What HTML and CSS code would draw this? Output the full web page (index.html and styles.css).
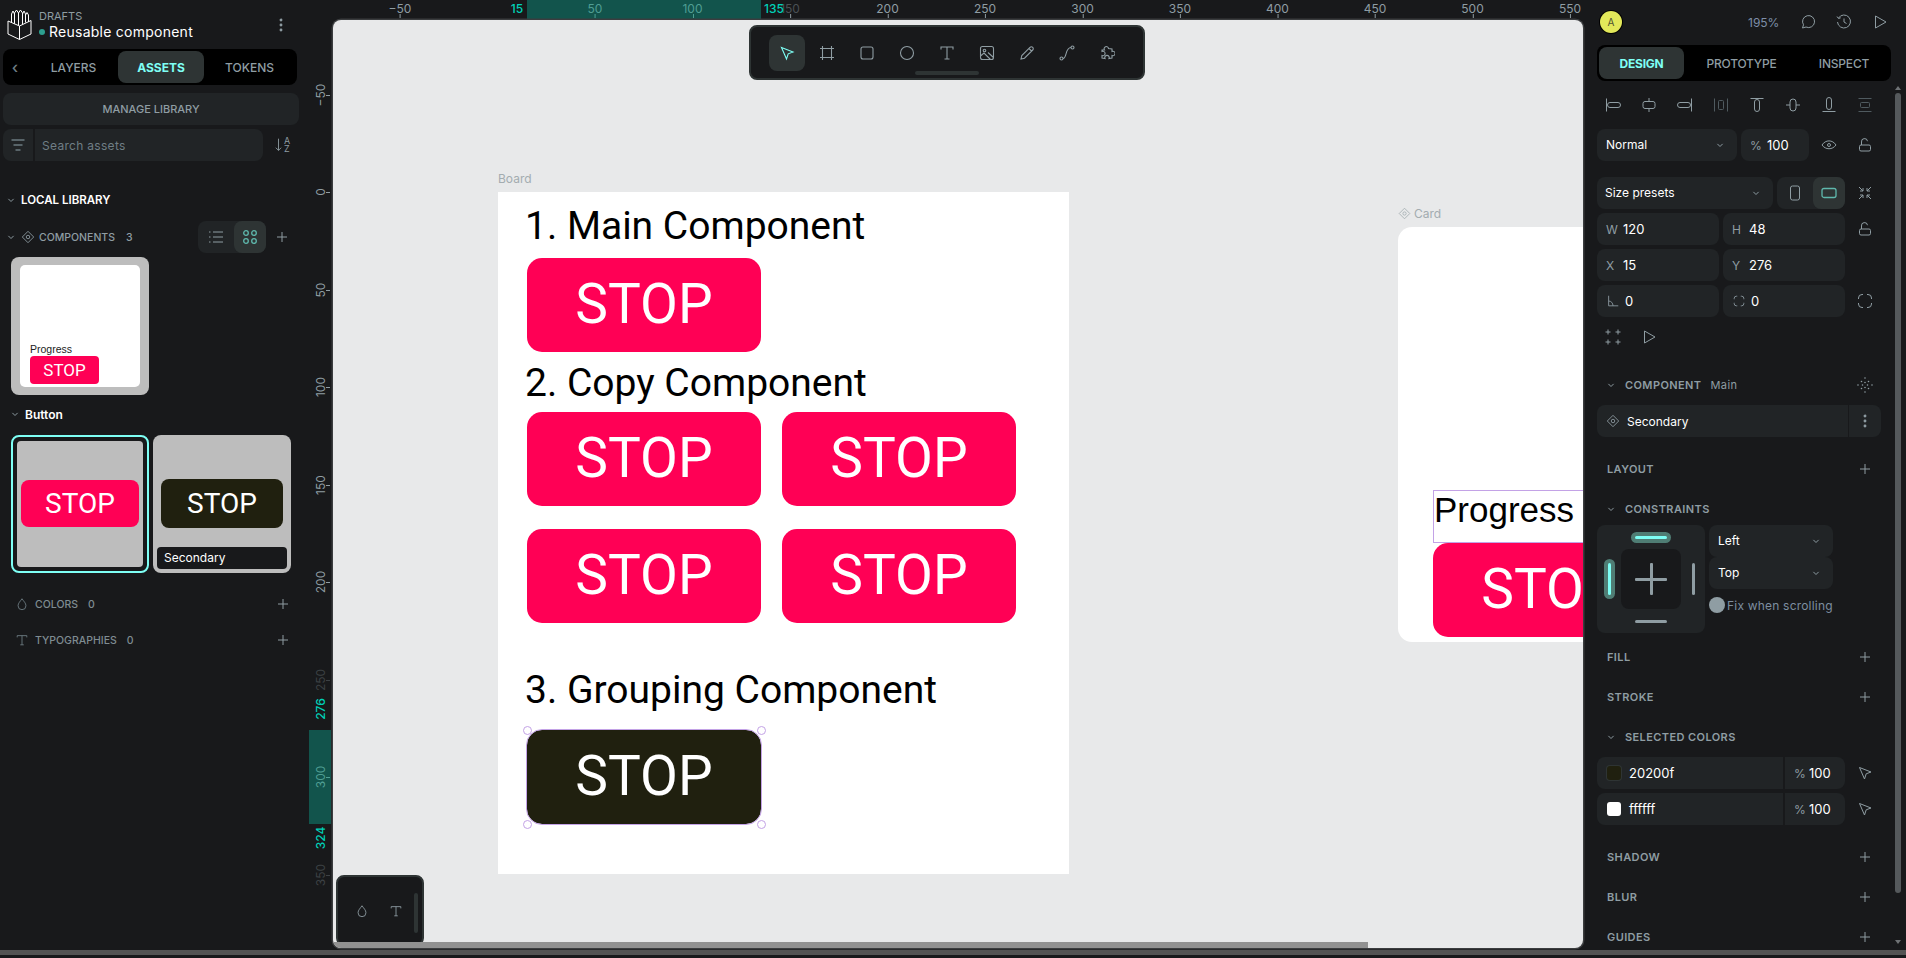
FILE: index.html

```html
<!DOCTYPE html>
<html lang="en">
<head>
    <meta charset="UTF-8">
    <title>Reusable component</title>
    <link rel="stylesheet" href="styles.css">
</head>
<body>
<svg class="sprite" width="0" height="0">
    <symbol id="plus" viewBox="0 0 16 16"><path d="M8 3v10M3 8h10"/></symbol>
    <symbol id="chev" viewBox="0 0 16 16"><path d="M4.5 6.5 8 10l3.5-3.500"/></symbol>
    <symbol id="diamond" viewBox="0 0 16 16"><path d="M8 1.5 14.5 8 8 14.5 1.5 8z"/><circle cx="8" cy="8" r="2"/></symbol>
    <symbol id="lock" viewBox="0 0 16 16"><rect x="2.5" y="8" width="11" height="6" rx="1.5"/><path d="M4.5 8V5a3 3 0 0 1 6-.8"/></symbol>
    <symbol id="arrow" viewBox="0 0 16 16"><path d="M2.5 2.5 14 7l-4.8 1.8L7.500 14z"/></symbol>
    <symbol id="play" viewBox="0 0 16 16"><path d="M3.5 2v12L14 8z"/></symbol>
    <symbol id="dots" viewBox="0 0 16 16"><circle cx="8" cy="3" r=".8"/><circle cx="8" cy="8" r=".8"/><circle cx="8" cy="13" r=".8"/></symbol>
</svg>

<div class="app">
    <aside class="left">
        <div class="file-head">
            <svg class="logo" viewBox="0 0 25 31"><path d="M1 12 12.5 17 24 11.5V25l-11.500 5.500L1 25zM12.5 17v13.500M4.500 13V5l1.500-3 1.500 3v9.500M7.500 14.500V4l2-3 2 3v12M11.500 16V4l2-3 2 3v11M15.500 15V5l1.500-3 1.500 3v8M18.500 13.500V6l1.500-2.500L21.500 6v7"/></svg>
            <div class="file-names">
                <div class="drafts">DRAFTS</div>
                <div class="file-name"><i class="status-dot"></i>Reusable component</div>
            </div>
            <svg class="icon dots-menu"><use href="#dots"/></svg>
        </div>
        <div class="tabs left-tabs">
            <span class="tab-back">&#8249;</span>
            <span class="tab tab-layers">LAYERS</span>
            <span class="tab tab-assets active">ASSETS</span>
            <span class="tab tab-tokens">TOKENS</span>
        </div>
        <div class="manage">MANAGE LIBRARY</div>
        <div class="search-row">
            <div class="filter-btn"><svg viewBox="0 0 16 16" class="icon"><path d="M1.5 3h13M3.5 8h9M5.5 13h5"/></svg></div>
            <div class="search-box">Search assets</div>
            <div class="sort-btn">
                <svg viewBox="0 0 10 16" class="sort-arrow"><path d="M5 1v13M2 11l3 3 3-3"/></svg>
                <span class="sort-az">A<br>Z</span>
            </div>
        </div>
        <div class="lib-title"><svg class="chev"><use href="#chev"/></svg>LOCAL LIBRARY</div>
        <div class="comp-row">
            <svg class="chev"><use href="#chev"/></svg>
            <svg class="icon diamond"><use href="#diamond"/></svg>
            <span class="comp-label">COMPONENTS</span>
            <span class="comp-count">3</span>
            <div class="view-toggle">
                <span class="view-opt"><svg viewBox="0 0 16 16" class="icon"><path d="M5 3h10M5 8h10M5 13h10M1 3h1.5M1 8h1.5M1 13h1.5"/></svg></span>
                <span class="view-opt active"><svg viewBox="0 0 16 16" class="icon"><circle cx="4" cy="4" r="2.3"/><circle cx="12" cy="4" r="2.3"/><circle cx="4" cy="12" r="2.3"/><circle cx="12" cy="12" r="2.3"/></svg></span>
            </div>
            <svg class="icon plus-left"><use href="#plus"/></svg>
        </div>
        <div class="thumb card-thumb">
            <div class="thumb-card">
                <div class="thumb-progress">Progress</div>
                <div class="thumb-stop">STOP</div>
            </div>
        </div>
        <div class="group-title"><svg class="chev"><use href="#chev"/></svg>Button</div>
        <div class="thumb-row">
            <div class="thumb btn-thumb selected">
                <div class="thumb-inner"><div class="big-stop red">STOP</div></div>
            </div>
            <div class="thumb btn-thumb second">
                <div class="big-stop dark">STOP</div>
                <div class="thumb-label">Secondary</div>
            </div>
        </div>
        <div class="asset-row first">
            <svg viewBox="0 0 16 16" class="icon asset-icon"><path d="M8 2C6 5 3.5 7 3.5 10a4.5 4.5 0 0 0 9 0C12.500 7 10 5 8 2z"/></svg>
            <span class="comp-label">COLORS</span><span class="comp-count">0</span>
            <svg class="icon plus-left"><use href="#plus"/></svg>
        </div>
        <div class="asset-row">
            <svg viewBox="0 0 16 16" class="icon asset-icon"><path d="M2.5 5V3h11v2M8 3v10.500M6 13.500h4"/></svg>
            <span class="comp-label">TYPOGRAPHIES</span><span class="comp-count">0</span>
            <svg class="icon plus-left"><use href="#plus"/></svg>
        </div>
    </aside>

    <main class="center">
        <div class="ruler-top">
            <div class="ruler-sel-x"></div>
            <span class="rt" style="left:91px">&minus;50</span>
            <span class="rt-green" style="left:208px">15</span>
            <span class="rt on-sel" style="left:286px">50</span>
            <span class="rt on-sel" style="left:383.5px">100</span>
            <span class="rt dim" style="left:481px">150</span>
            <span class="rt-green" style="left:465px">135</span>
            <span class="rt" style="left:578.5px">200</span>
            <span class="rt" style="left:676px">250</span>
            <span class="rt" style="left:773.5px">300</span>
            <span class="rt" style="left:871px">350</span>
            <span class="rt" style="left:968.5px">400</span>
            <span class="rt" style="left:1066px">450</span>
            <span class="rt" style="left:1163.5px">500</span>
            <span class="rt" style="left:1261px">550</span>
        </div>
        <div class="mid">
            <div class="ruler-left">
                <div class="ruler-sel-y"></div>
                <div class="rl" style="top:74.5px"><span>&minus;50</span></div>
                <div class="rl" style="top:172px"><span>0</span></div>
                <div class="rl" style="top:269.5px"><span>50</span></div>
                <div class="rl" style="top:367px"><span>100</span></div>
                <div class="rl" style="top:464.5px"><span>150</span></div>
                <div class="rl" style="top:562px"><span>200</span></div>
                <div class="rl dim" style="top:659.5px"><span>250</span></div>
                <div class="rl green" style="top:689px"><span>276</span></div>
                <div class="rl on-sel" style="top:757px"><span>300</span></div>
                <div class="rl green" style="top:818px"><span>324</span></div>
                <div class="rl dim" style="top:854.5px"><span>350</span></div>
            </div>
            <div class="canvas">
                <div class="board-label">Board</div>
                <div class="board">
                    <div class="heading h-one">1. Main Component</div>
                    <div class="stop-btn red b-main">STOP</div>
                    <div class="heading h-two">2. Copy Component</div>
                    <div class="stop-btn red b-a">STOP</div>
                    <div class="stop-btn red b-b">STOP</div>
                    <div class="stop-btn red b-c">STOP</div>
                    <div class="stop-btn red b-d">STOP</div>
                    <div class="heading h-three">3. Grouping Component</div>
                    <div class="stop-btn dark b-sel">
                        STOP
                        <i class="handle tl"></i><i class="handle tr"></i><i class="handle bl"></i><i class="handle br"></i>
                    </div>
                </div>
                <div class="card-label"><svg class="icon"><use href="#diamond"/></svg>Card</div>
                <div class="card">
                    <div class="card-progress">Progress</div>
                    <div class="stop-btn red card-stop">STOP</div>
                </div>

                <div class="toolbar">
                    <span class="tool active"><svg class="icon"><use href="#arrow"/></svg></span>
                    <span class="tool"><svg viewBox="0 0 16 16" class="icon"><path d="M3.5 1v14M12.5 1v14M1 3.5h14M1 12.5h14"/></svg></span>
                    <span class="tool"><svg viewBox="0 0 16 16" class="icon"><rect x="2" y="2" width="12" height="12" rx="2"/></svg></span>
                    <span class="tool"><svg viewBox="0 0 16 16" class="icon"><circle cx="8" cy="8" r="6.5"/></svg></span>
                    <span class="tool"><svg viewBox="0 0 16 16" class="icon"><path d="M2 4.5V2h12v2.500M8 2v12M5.500 14h5"/></svg></span>
                    <span class="tool"><svg viewBox="0 0 16 16" class="icon"><rect x="1.5" y="1.5" width="13" height="13" rx="2"/><circle cx="5.5" cy="5.500" r="1.3"/><path d="M1.5 11 5 8l6.500 6.500M9 7.500l5.500 5"/></svg></span>
                    <span class="tool"><svg viewBox="0 0 16 16" class="icon"><path d="M2 14l.8-3.500L11 2.300a1.500 1.500 0 0 1 2.700 2.700L5.500 13.200zM10 3.500 12.500 6"/></svg></span>
                    <span class="tool"><svg viewBox="0 0 16 16" class="icon"><circle cx="2.500" cy="13.500" r="1.500"/><circle cx="13.500" cy="2.500" r="1.500"/><path d="M4 13.500C8 13.500 6 2.500 12 2.500"/></svg></span>
                    <span class="tool"><svg viewBox="0 0 16 16" class="icon"><path d="M3 5h2.500a2.200 2.200 0 1 1 4-1.500L13 4v2.500a2.200 2.200 0 1 1 0 4V13l-3 .5a2.200 2.200 0 1 0-4 0L3 13v-2.500a2.200 2.200 0 1 0 0-4z"/></svg></span>
                    <i class="tool-grip"></i>
                </div>

                <div class="mini-tools">
                    <svg viewBox="0 0 16 16" class="icon"><path d="M8 2C6 5 3.5 7 3.5 10a4.5 4.500 0 0 0 9 0C12.500 7 10 5 8 2z"/></svg>
                    <svg viewBox="0 0 16 16" class="icon"><path d="M2.500 5V3h11v2M8 3v10.500M6 13.500h4"/></svg>
                    <i class="mini-grip"></i>
                </div>
                <div class="canvas-scroll"></div>
            </div>
        </div>
    </main>

    <aside class="right">
        <div class="right-head">
            <div class="avatar">A</div>
            <span class="zoom-val">195%</span>
            <span class="head-btn"><svg viewBox="0 0 16 16" class="icon"><path d="M2.500 14l1-3.200A6 6 0 1 1 6 13z"/></svg></span>
            <span class="head-btn"><svg viewBox="0 0 16 16" class="icon"><path d="M2.500 4A6.500 6.500 0 1 1 1.500 8M1 2.500l1.500 2 2.200-.7M8 4.500V8l2.500 1.500"/></svg></span>
            <span class="head-btn"><svg class="icon"><use href="#play"/></svg></span>
        </div>
        <div class="tabs right-tabs">
            <span class="tab tab-design active">DESIGN</span>
            <span class="tab tab-proto">PROTOTYPE</span>
            <span class="tab tab-inspect">INSPECT</span>
        </div>
        <div class="align-row">
            <span class="slot36"><svg viewBox="0 0 16 16" class="icon"><path d="M1.500 1.500v13M5 5.500h8a2 2 0 0 1 0 5H5a2 2 0 0 1 0-5z"/></svg></span>
            <span class="slot36"><svg viewBox="0 0 16 16" class="icon"><path d="M8 1v3.500M8 11.500V15M4 4.500h8a2 2 0 0 1 2 2v3a2 2 0 0 1-2 2H4a2 2 0 0 1-2-2v-3a2 2 0 0 1 2-2z"/></svg></span>
            <span class="slot36"><svg viewBox="0 0 16 16" class="icon"><path d="M14.500 1.500v13M3 5.500h8a2 2 0 0 1 0 5H3a2 2 0 0 1 0-5z"/></svg></span>
            <span class="slot36 faint"><svg viewBox="0 0 16 16" class="icon"><path d="M1.500 1.500v13M14.500 1.500v13M6.500 3.500h3a1 1 0 0 1 1 1v7a1 1 0 0 1-1 1h-3a1 1 0 0 1-1-1v-7a1 1 0 0 1 1-1z"/></svg></span>
            <span class="slot36"><svg viewBox="0 0 16 16" class="icon"><path d="M1.500 1.500h13M5.500 5a2 2 0 0 1 5 0v7a2 2 0 0 1-5 0z"/></svg></span>
            <span class="slot36"><svg viewBox="0 0 16 16" class="icon"><path d="M1 8h4M11 8h4M5 5a3 3 0 0 1 6 0v6a3 3 0 0 1-6 0z"/></svg></span>
            <span class="slot36"><svg viewBox="0 0 16 16" class="icon"><path d="M1.500 14.500h13M5.500 3a2 2 0 0 1 5 0v7a2 2 0 0 1-5 0z"/></svg></span>
            <span class="slot36 faint"><svg viewBox="0 0 16 16" class="icon"><path d="M1.500 1.500h13M1.500 14.500h13M4.500 5.500h7a1 1 0 0 1 1 1v3a1 1 0 0 1-1 1h-7a1 1 0 0 1-1-1v-3a1 1 0 0 1 1-1z"/></svg></span>
        </div>
        <div class="row blend-row">
            <div class="field select w-blend"><span class="val-normal">Normal</span><svg class="chev"><use href="#chev"/></svg></div>
            <div class="field w-opacity"><span class="unit">%</span><span class="val">100</span></div>
            <span class="slot"><svg viewBox="0 0 16 16" class="icon"><path d="M1 8c3.500-5.500 10.500-5.500 14 0-3.500 5-10.500 5-14 0z"/><circle cx="8" cy="8" r="1.500"/></svg></span>
            <span class="slot"><svg class="icon"><use href="#lock"/></svg></span>
        </div>
        <div class="row size-row">
            <div class="field select w-preset"><span class="val-normal">Size presets</span><svg class="chev"><use href="#chev"/></svg></div>
            <div class="orient">
                <span class="view-opt"><svg viewBox="0 0 16 16" class="icon"><rect x="3.500" y="1" width="9" height="14" rx="2"/></svg></span>
                <span class="view-opt active"><svg viewBox="0 0 16 16" class="icon"><rect x="1" y="3.500" width="14" height="9" rx="2"/></svg></span>
            </div>
            <span class="slot"><svg viewBox="0 0 16 16" class="icon"><path d="M2 2l4 4M6 3v3H3M14 2l-4 4M10 3v3h3M2 14l4-4M3 10h3v3M14 14l-4-4M13 10h-3v3"/></svg></span>
        </div>
        <div class="row size-next">
            <div class="field half"><span class="unit">W</span><span class="val">120</span></div>
            <div class="field half"><span class="unit">H</span><span class="val">48</span></div>
            <span class="slot"><svg class="icon"><use href="#lock"/></svg></span>
        </div>
        <div class="row size-next">
            <div class="field half"><span class="unit">X</span><span class="val">15</span></div>
            <div class="field half"><span class="unit">Y</span><span class="val">276</span></div>
        </div>
        <div class="row size-next">
            <div class="field half"><svg viewBox="0 0 16 16" class="icon unit-icon"><path d="M3 2v11.500h11M3 8c3 0 5 2.500 5 5.500"/></svg><span class="val">0</span></div>
            <div class="field half"><svg viewBox="0 0 16 16" class="icon unit-icon"><path d="M6 2.500H5A2.500 2.500 0 0 0 2.500 5v1M10 2.500h1A2.500 2.500 0 0 1 13.500 5v1M6 13.500H5A2.500 2.500 0 0 1 2.500 11v-1M10 13.500h1a2.500 2.500 0 0 0 2.500-2.500v-1"/></svg><span class="val">0</span></div>
            <span class="slot"><svg viewBox="0 0 16 16" class="icon"><path d="M6 1.500H5A3.500 3.500 0 0 0 1.500 5v1M10 1.500h1A3.500 3.500 0 0 1 14.500 5v1M6 14.500H5A3.500 3.500 0 0 1 1.500 11v-1M10 14.500h1a3.500 3.500 0 0 0 3.500-3.500v-1"/></svg></span>
        </div>
        <div class="row size-next">
            <span class="slot"><svg viewBox="0 0 16 16" class="icon"><path d="M3 .5v5M.5 3h5M13 .5v5M10.500 3h5M3 10.500v5M.5 13h5M13 10.500v5M10.500 13h5"/></svg></span>
            <span class="slot"><svg class="icon"><use href="#play"/></svg></span>
        </div>

        <div class="sec-title sec-gap"><svg class="chev"><use href="#chev"/></svg><span>COMPONENT</span><span class="sec-extra">Main</span>
            <svg viewBox="0 0 16 16" class="icon sec-end dotted"><path d="M8 1v.01M8 15v.01M1 8h.01M15 8h.01M4.500 4.500h.01M11.500 4.500h.01M4.500 11.500h.01M11.500 11.500h.01M8 5.500v.01M8 10.500v.01M5.500 8h.01M10.500 8h.01"/></svg>
        </div>
        <div class="comp-field">
            <svg class="icon"><use href="#diamond"/></svg>
            <span class="comp-name">Secondary</span>
            <span class="comp-more"><svg class="icon"><use href="#dots"/></svg></span>
        </div>
        <div class="sec-title plain sec-gap"><span>LAYOUT</span><svg class="icon sec-end"><use href="#plus"/></svg></div>
        <div class="sec-title sec-tight"><svg class="chev"><use href="#chev"/></svg><span>CONSTRAINTS</span></div>
        <div class="constraints">
            <div class="c-box">
                <i class="c-pill c-top"></i>
                <i class="c-pill c-left"></i>
                <i class="c-line c-right"></i>
                <i class="c-line c-bottom"></i>
                <div class="c-center"><i class="c-h"></i><i class="c-v"></i></div>
            </div>
            <div class="c-fields">
                <div class="field select c-select"><span class="val-normal">Left</span><svg class="chev"><use href="#chev"/></svg></div>
                <div class="field select c-select"><span class="val-normal">Top</span><svg class="chev"><use href="#chev"/></svg></div>
                <div class="c-check"><i class="c-radio"></i>Fix when scrolling</div>
            </div>
        </div>
        <div class="sec-title plain s-next"><span>FILL</span><svg class="icon sec-end"><use href="#plus"/></svg></div>
        <div class="sec-title plain s-next"><span>STROKE</span><svg class="icon sec-end"><use href="#plus"/></svg></div>
        <div class="sec-title s-next"><svg class="chev"><use href="#chev"/></svg><span>SELECTED COLORS</span></div>
        <div class="row size-next">
            <div class="color-field">
                <i class="swatch sw-dark"></i><span class="val color-name">20200f</span>
                <span class="color-alpha"><span class="unit">%</span><span class="val">100</span></span>
            </div>
            <span class="slot"><svg class="icon"><use href="#arrow"/></svg></span>
        </div>
        <div class="row size-next">
            <div class="color-field">
                <i class="swatch sw-white"></i><span class="val color-name">ffffff</span>
                <span class="color-alpha"><span class="unit">%</span><span class="val">100</span></span>
            </div>
            <span class="slot"><svg class="icon"><use href="#arrow"/></svg></span>
        </div>
        <div class="sec-title plain sec-gap"><span>SHADOW</span><svg class="icon sec-end"><use href="#plus"/></svg></div>
        <div class="sec-title plain s-next"><span>BLUR</span><svg class="icon sec-end"><use href="#plus"/></svg></div>
        <div class="sec-title plain s-next"><span>GUIDES</span><svg class="icon sec-end"><use href="#plus"/></svg></div>

        <div class="panel-scroll">
            <i class="scroll-up"></i>
            <i class="scroll-thumb"></i>
            <i class="scroll-down"></i>
        </div>
    </aside>
</div>
<div class="bottom-strip"></div>
</body>
</html>
```

FILE: styles.css

```css
* {
    box-sizing: border-box;
}
html, body {
    margin: 0;
    height: 958px;
    overflow: hidden;
}
body {
    background-color: #18191b;
    font-family: "Inter", "Liberation Sans", sans-serif;
    color: #8f9da3;
}
i {
    display: block;
}
.sprite {
    position: absolute;
}
.icon {
    width: 16px;
    height: 16px;
    fill: none;
    stroke: #8f9da3;
    stroke-width: 1;
    flex: none;
}
.chev {
    width: 12px;
    height: 12px;
    fill: none;
    stroke: #8f9da3;
    stroke-width: 1.3;
    flex: none;
}
.app {
    display: flex;
    height: 950px;
    background-color: #18191b;
}
.bottom-strip {
    height: 5px;
    background-color: #535353;
}

/* left sidebar */
.left {
    width: 309px;
    flex: none;
    padding-left: 3px;
}
.file-head {
    height: 49px;
    display: flex;
    align-items: flex-start;
    padding: 9px 0 0 4px;
}
.logo {
    width: 25px;
    height: 31px;
    fill: none;
    stroke: #fff;
    stroke-width: 1;
    flex: none;
}
.file-names {
    margin-left: 7px;
    width: 234px;
}
.drafts {
    font-size: 11px;
    line-height: 12px;
    margin-top: 1px;
}
.file-name {
    display: flex;
    align-items: center;
    color: #fff;
    font-size: 14px;
    letter-spacing: .25px;
    line-height: 18px;
    margin-top: 1px;
}
.status-dot {
    width: 6px;
    height: 6px;
    background-color: #2d9f8f;
    border-radius: 50%;
    margin-right: 4px;
}
.dots-menu {
    margin-top: 8px;
    stroke-width: 1.3;
}
.tabs {
    height: 36px;
    background-color: #000;
    border-radius: 8px;
    display: flex;
    align-items: center;
    padding: 2px;
    font-size: 12px;
    font-weight: 500;
}
.left-tabs {
    width: 294px;
}
.tab-back {
    width: 20px;
    margin-right: 4px;
    text-align: center;
    font-size: 16px;
    color: #6f7e85;
}
.tab {
    height: 32px;
    display: flex;
    align-items: center;
    justify-content: center;
    border-radius: 8px;
}
.tab.active {
    background-color: #2e3434;
    color: #7efff5;
    font-weight: 700;
}
.tab-layers {
    width: 89px;
}
.tab-assets {
    width: 86px;
}
.tab-tokens {
    width: 91px;
}
.manage {
    width: 296px;
    height: 32px;
    margin-top: 8px;
    background-color: #212426;
    border-radius: 8px;
    display: flex;
    align-items: center;
    justify-content: center;
    font-size: 11px;
    font-weight: 500;
}
.search-row {
    display: flex;
    height: 32px;
    margin-top: 4px;
}
.filter-btn {
    width: 30px;
    background-color: #212426;
    border-radius: 8px 0 0 8px;
    display: flex;
    align-items: center;
    justify-content: center;
}
.filter-btn .icon {
    stroke-width: 1.3;
    stroke: #6b7a80;
}
.search-box {
    width: 228px;
    margin-left: 2px;
    background-color: #212426;
    border-radius: 0 8px 8px 0;
    padding-left: 7px;
    display: flex;
    align-items: center;
    font-size: 12px;
    letter-spacing: .3px;
    color: #6f7e85;
}
.sort-btn {
    display: flex;
    align-items: center;
    margin-left: 11px;
}
.sort-arrow {
    width: 9px;
    height: 16px;
    fill: none;
    stroke: #8f9da3;
}
.sort-az {
    font-size: 9px;
    line-height: 8px;
    margin-left: 1px;
}
.lib-title {
    margin-top: 23px;
    height: 32px;
    display: flex;
    align-items: center;
    padding-left: 2px;
    gap: 4px;
    color: #fff;
    font-size: 11.5px;
    font-weight: 600;
}
.comp-row {
    margin-top: 5px;
    height: 32px;
    display: flex;
    align-items: center;
    padding-left: 2px;
    font-size: 10.5px;
    font-weight: 500;
}
.diamond {
    margin-left: 4px;
    width: 14px;
    height: 14px;
}
.comp-label {
    margin-left: 4px;
}
.comp-count {
    margin-left: 11px;
}
.view-toggle {
    margin-left: 65px;
    width: 68px;
    height: 32px;
    display: flex;
    background-color: #212426;
    border-radius: 8px;
}
.view-opt {
    width: 36px;
    display: flex;
    align-items: center;
    justify-content: center;
    border-radius: 8px;
}
.view-opt.active {
    width: 32px;
    background-color: #2e3434;
}
.view-opt.active .icon {
    stroke: #5fb8ad;
    stroke-width: 1.3;
}
.plus-left {
    margin-left: 8px;
}
.thumb {
    width: 138px;
    height: 138px;
    background-color: #bdbdbd;
    border-radius: 8px;
}
.card-thumb {
    margin: 4px 0 0 8px;
    padding: 8px 9px;
}
.thumb-card {
    height: 122px;
    background-color: #fff;
    border-radius: 5px;
    padding: 77px 0 0 10px;
}
.thumb-progress {
    color: #222;
    font-family: "Liberation Sans", sans-serif;
    font-size: 10.5px;
    line-height: 14px;
}
.thumb-stop {
    width: 69px;
    height: 28px;
    background-color: #ff0055;
    border-radius: 4px;
    color: #fff;
    font-family: "Roboto", sans-serif;
    font-size: 17px;
    display: flex;
    align-items: center;
    justify-content: center;
}
.group-title {
    margin: 3px 0 0 6px;
    height: 32px;
    display: flex;
    align-items: center;
    gap: 4px;
    color: #fff;
    font-size: 12px;
    font-weight: 600;
}
.thumb-row {
    display: flex;
    gap: 4px;
    margin: 5px 0 0 8px;
}
.btn-thumb.selected {
    background-color: #18191b;
    border: 2px solid #7efff5;
    padding: 4px;
}
.thumb-inner {
    height: 100%;
    background-color: #bdbdbd;
    border-radius: 4px;
    display: flex;
    align-items: center;
    justify-content: center;
}
.big-stop {
    color: #fff;
    font-family: "Roboto", sans-serif;
    font-size: 28px;
    border-radius: 8px;
    display: flex;
    align-items: center;
    justify-content: center;
}
.thumb-inner .big-stop {
    width: 118px;
    height: 47px;
    margin-top: -2px;
}
.big-stop.red {
    background-color: #ff0055;
}
.big-stop.dark {
    background-color: #20200f;
}
.second {
    position: relative;
    padding: 44px 8px 0;
}
.second .big-stop {
    height: 49px;
}
.thumb-label {
    position: absolute;
    left: 4px;
    right: 4px;
    bottom: 4px;
    height: 22px;
    background-color: #18191b;
    border-radius: 4px;
    color: #fff;
    font-size: 12px;
    line-height: 22px;
    padding-left: 7px;
}
.asset-row {
    margin-top: 4px;
    height: 32px;
    display: flex;
    align-items: center;
    padding-left: 12px;
    font-size: 10.5px;
    font-weight: 500;
    color: #7f8c92;
}
.asset-row.first {
    margin-top: 15px;
}
.asset-row .icon {
    stroke: #6f7e85;
    width: 14px;
    height: 14px;
}
.asset-row .comp-label {
    margin-left: 6px;
}
.asset-row .comp-count {
    margin-left: 10px;
}
.asset-row .plus-left {
    stroke: #8f9da3;
    width: 16px;
    height: 16px;
    margin-left: auto;
    margin-right: 18px;
}

/* rulers and canvas */
.center {
    flex: 1;
    min-width: 0;
    display: flex;
    flex-direction: column;
}
.ruler-top {
    height: 20px;
    flex: none;
    position: relative;
    font-size: 12px;
}
.ruler-sel-x {
    position: absolute;
    left: 218px;
    width: 234px;
    top: 0;
    height: 19px;
    background-color: #12544c;
}
.rt, .rt-green {
    position: absolute;
    top: 1px;
    line-height: 15px;
    transform: translateX(-50%);
}
.rt::after {
    content: "";
    position: absolute;
    left: 50%;
    top: 13px;
    width: 1px;
    height: 4px;
    background-color: #8f9da3;
}
.rt-green {
    color: #00d1b8;
    font-weight: 500;
}
.rt.on-sel {
    color: #4f9e93;
}
.rt.on-sel::after {
    background-color: #4f9e93;
}
.rt.dim {
    color: #4a5054;
}
.mid {
    height: 928px;
    display: flex;
}
.ruler-left {
    width: 24px;
    flex: none;
    position: relative;
    font-size: 12px;
}
.ruler-sel-y {
    position: absolute;
    left: 0;
    width: 22px;
    top: 710px;
    height: 94px;
    background-color: #12544c;
}
.rl {
    position: absolute;
    left: 0;
    width: 22px;
    height: 0;
}
.rl span {
    position: absolute;
    left: 11px;
    top: 0;
    white-space: nowrap;
    transform: translate(-50%, -50%) rotate(-90deg);
}
.rl::after {
    content: "";
    position: absolute;
    left: 17px;
    top: 0;
    width: 4px;
    height: 1px;
    background-color: #8f9da3;
}
.rl.green {
    color: #00d1b8;
    font-weight: 500;
}
.rl.green::after {
    display: none;
}
.rl.on-sel {
    color: #4f9e93;
}
.rl.on-sel::after {
    background-color: #4f9e93;
}
.rl.dim {
    color: #3c4144;
}
.rl.dim::after {
    background-color: #3c4144;
}
.canvas {
    position: relative;
    flex: 1;
    height: 928px;
    background-color: #e8e9ea;
    border-radius: 8px;
    overflow: hidden;
    box-shadow: 0 0 0 1.5px #3b3d3f;
}
.board-label {
    position: absolute;
    left: 165px;
    top: 151px;
    font-size: 12px;
    color: #a3acb0;
}
.board {
    position: absolute;
    left: 164.5px;
    top: 172px;
    width: 571px;
    height: 682px;
    background-color: #fff;
}
.heading {
    position: absolute;
    left: 27.5px;
    color: #000;
    font-family: "Roboto", sans-serif;
    font-size: 39px;
    line-height: 46px;
    white-space: nowrap;
}
.h-one {
    top: 11px;
}
.h-two {
    top: 168px;
}
.h-three {
    top: 475px;
}
.stop-btn {
    position: absolute;
    width: 234px;
    height: 94px;
    border-radius: 15px;
    color: #fff;
    font-family: "Roboto", sans-serif;
    font-size: 55px;
    padding-bottom: 2px;
    display: flex;
    align-items: center;
    justify-content: center;
}
.stop-btn.red {
    background-color: #ff0055;
}
.stop-btn.dark {
    background-color: #20200f;
}
.b-main {
    left: 29.5px;
    top: 66px;
}
.b-a {
    left: 29.5px;
    top: 220px;
}
.b-b {
    left: 284.5px;
    top: 220px;
}
.b-c {
    left: 29.5px;
    top: 337px;
}
.b-d {
    left: 284.5px;
    top: 337px;
}
.b-sel {
    left: 29.5px;
    top: 538px;
    outline: 1.5px solid #c3a2e6;
}
.handle {
    position: absolute;
    width: 9px;
    height: 9px;
    background-color: #fff;
    border: 1.5px solid #c3a2e6;
    border-radius: 50%;
}
.tl {
    left: -4.5px;
    top: -4.5px;
}
.tr {
    right: -4.5px;
    top: -4.5px;
}
.bl {
    left: -4.5px;
    bottom: -4.5px;
}
.br {
    right: -4.5px;
    bottom: -4.5px;
}
.card-label {
    position: absolute;
    left: 1065px;
    top: 186px;
    display: flex;
    align-items: center;
    gap: 3px;
    font-size: 12px;
    color: #a3acb0;
}
.card-label .icon {
    width: 13px;
    height: 13px;
    stroke: #a3acb0;
}
.card {
    position: absolute;
    left: 1065px;
    top: 207px;
    width: 400px;
    height: 415px;
    background-color: #fff;
    border-radius: 14px;
}
.card-progress {
    position: absolute;
    left: 35px;
    top: 263px;
    width: 300px;
    height: 53px;
    border: 1.5px solid #c3a2e6;
    color: #000;
    font-family: "Liberation Sans", sans-serif;
    font-size: 35px;
    line-height: 38px;
    white-space: nowrap;
}
.card-stop {
    left: 35px;
    top: 316px;
}
.toolbar {
    position: absolute;
    left: 416px;
    top: 5px;
    width: 396px;
    height: 55px;
    background-color: #18191b;
    border: 2px solid #2e3434;
    border-radius: 8px;
    display: flex;
    align-items: flex-start;
    padding: 8px 0 0 18px;
    gap: 4px;
}
.tool {
    width: 36px;
    height: 36px;
    border-radius: 8px;
    display: flex;
    align-items: center;
    justify-content: center;
}
.tool .icon {
    stroke-width: 1.1;
}
.tool.active {
    background-color: #2e3434;
}
.tool.active .icon {
    stroke: #7efff5;
}
.tool-grip {
    position: absolute;
    left: 164px;
    bottom: 3px;
    width: 64px;
    height: 4px;
    background-color: #2e3434;
    border-radius: 2px;
}
.mini-tools {
    position: absolute;
    left: 3px;
    top: 855px;
    width: 88px;
    height: 71px;
    background-color: #18191b;
    border: 2px solid #2e3434;
    border-radius: 8px;
    display: flex;
    align-items: center;
    padding-left: 17px;
    gap: 20px;
}
.mini-tools .icon {
    width: 14px;
    height: 14px;
}
.mini-grip {
    position: absolute;
    right: 4px;
    top: 16px;
    width: 4px;
    height: 40px;
    background-color: #2e3434;
    border-radius: 2px;
}
.canvas-scroll {
    position: absolute;
    left: 0;
    top: 921.5px;
    width: 1035px;
    height: 6px;
    background-color: #919191;
}

/* right panel */
.right {
    width: 323px;
    flex: none;
    position: relative;
    padding-left: 14px;
    overflow: hidden;
    border-radius: 0 0 8px 0;
}
.right-head {
    height: 45px;
    display: flex;
    align-items: center;
    padding-bottom: 1px;
}
.avatar {
    width: 22px;
    height: 22px;
    margin-left: 3px;
    border-radius: 50%;
    background-color: #e2e85a;
    color: #4d5030;
    font-size: 10px;
    display: flex;
    align-items: center;
    justify-content: center;
    box-shadow: 0 0 0 1px #000;
}
.zoom-val {
    margin-left: 126px;
    width: 42px;
    font-size: 12px;
    color: #7d8ea8;
}
.head-btn {
    width: 36px;
    display: flex;
    justify-content: center;
}
.right-tabs {
    width: 294px;
    letter-spacing: -.2px;
}
.tab-design {
    width: 85px;
}
.tab-proto {
    width: 115px;
}
.tab-inspect {
    width: 90px;
}
.align-row {
    height: 32px;
    margin: 8px 0 8px -2px;
    display: flex;
}
.slot36 {
    width: 36px;
    display: flex;
    align-items: center;
    justify-content: center;
}
.slot36.faint .icon {
    stroke: #4f5a5f;
}
.row {
    height: 32px;
    display: flex;
    gap: 4px;
}
.size-row {
    margin-top: 16px;
}
.size-next {
    margin-top: 4px;
}
.field {
    background-color: #212426;
    border-radius: 8px;
    display: flex;
    align-items: center;
    padding-left: 9px;
    font-size: 13px;
}
.select {
    justify-content: space-between;
    padding-right: 11px;
}
.val-normal {
    color: #fff;
    font-size: 12px;
    padding-bottom: 2px;
}
.val {
    color: #fff;
    font-size: 13px;
}
.unit {
    font-size: 12px;
    width: 17px;
    color: #8f9da3;
}
.w-blend {
    width: 140px;
}
.w-opacity {
    width: 68px;
}
.w-preset {
    width: 176px;
    padding-left: 8px;
}
.orient {
    display: flex;
    width: 68px;
    background-color: #212426;
    border-radius: 8px;
}
.half {
    width: 122px;
}
.unit-icon {
    width: 14px;
    height: 14px;
    margin-right: 5px;
}
.slot {
    width: 32px;
    display: flex;
    align-items: center;
    justify-content: center;
}
.sec-title {
    height: 32px;
    display: flex;
    align-items: center;
    font-size: 11px;
    font-weight: 600;
    letter-spacing: .4px;
    padding-left: 8px;
    gap: 8px;
    width: 284px;
    color: #8f9da3;
}
.sec-title.plain {
    padding-left: 10px;
}
.sec-end {
    margin-left: auto;
    margin-right: 8px;
}
.dotted {
    stroke-width: 1.6;
    stroke-linecap: round;
}
.sec-extra {
    font-weight: 400;
    margin-left: 1px;
}
.sec-gap {
    margin-top: 16px;
}
.sec-tight {
    margin-top: 8px;
}
.s-next {
    margin-top: 8px;
}
.comp-field {
    width: 284px;
    height: 32px;
    margin-top: 4px;
    background-color: #212426;
    border-radius: 8px;
    display: flex;
    align-items: center;
    padding-left: 9px;
}
.comp-field .icon {
    width: 14px;
    height: 14px;
}
.comp-name {
    color: #fff;
    font-size: 12px;
    margin-left: 7px;
}
.comp-more {
    margin-left: auto;
    width: 33px;
    height: 32px;
    border-left: 1px solid #18191b;
    display: flex;
    align-items: center;
    justify-content: center;
}
.comp-more .icon {
    width: 16px;
    height: 16px;
    stroke-width: 1.3;
}
.constraints {
    display: flex;
    gap: 4px;
}
.c-box {
    position: relative;
    width: 108px;
    height: 108px;
    background-color: #212426;
    border-radius: 8px;
}
.c-center {
    position: absolute;
    left: 24px;
    top: 24px;
    width: 60px;
    height: 60px;
    background-color: #18191b;
    border-radius: 8px;
}
.c-h, .c-v {
    position: absolute;
    background-color: #8f9da3;
    border-radius: 1px;
}
.c-h {
    left: 14px;
    top: 29px;
    width: 32px;
    height: 3px;
}
.c-v {
    left: 29px;
    top: 14px;
    width: 3px;
    height: 32px;
}
.c-pill {
    position: absolute;
    background-color: #4f7d74;
    border-radius: 6px;
}
.c-pill::after {
    content: "";
    position: absolute;
    background-color: #7efff5;
    border-radius: 2px;
}
.c-top {
    left: 34px;
    top: 7px;
    width: 40px;
    height: 11px;
}
.c-top::after {
    left: 4px;
    top: 4px;
    width: 32px;
    height: 3px;
}
.c-left {
    left: 7px;
    top: 34px;
    width: 11px;
    height: 40px;
}
.c-left::after {
    left: 4px;
    top: 4px;
    width: 3px;
    height: 32px;
}
.c-line {
    position: absolute;
    background-color: #8f9da3;
    border-radius: 2px;
}
.c-right {
    left: 95px;
    top: 38px;
    width: 3px;
    height: 32px;
}
.c-bottom {
    left: 38px;
    top: 95px;
    width: 32px;
    height: 3px;
}
.c-fields {
    width: 124px;
}
.c-select {
    height: 32px;
}
.c-check {
    display: flex;
    align-items: center;
    height: 32px;
    font-size: 12px;
    letter-spacing: .2px;
    white-space: nowrap;
    color: #7d8ea0;
}
.c-radio {
    width: 16px;
    height: 16px;
    background-color: #8f9da3;
    border-radius: 50%;
    margin-right: 2px;
}
.color-field {
    width: 248px;
    background-color: #212426;
    border-radius: 8px;
    display: flex;
    align-items: center;
    padding-left: 10px;
    position: relative;
}
.swatch {
    width: 14px;
    height: 14px;
    border-radius: 3px;
}
.sw-dark {
    background-color: #20200f;
    box-shadow: 0 0 0 1px #2e3434;
}
.sw-white {
    background-color: #fff;
}
.color-name {
    margin-left: 8px;
}
.color-alpha {
    margin-left: auto;
    width: 62px;
    height: 32px;
    border-left: 2px solid #18191b;
    display: flex;
    align-items: center;
    padding-left: 9px;
}
.color-alpha .unit {
    width: 15px;
}
.panel-scroll {
    position: absolute;
    left: 312px;
    top: 0;
    width: 6px;
    height: 950px;
}
.scroll-thumb {
    position: absolute;
    top: 93px;
    width: 6px;
    height: 800px;
    background-color: #55595c;
    border-radius: 3px;
}
.scroll-up, .scroll-down {
    position: absolute;
    left: 0;
    width: 0;
    height: 0;
    border-left: 3px solid transparent;
    border-right: 3px solid transparent;
}
.scroll-up {
    top: 86px;
    border-bottom: 4px solid #6e7275;
}
.scroll-down {
    top: 940px;
    border-top: 4px solid #6e7275;
}
```
